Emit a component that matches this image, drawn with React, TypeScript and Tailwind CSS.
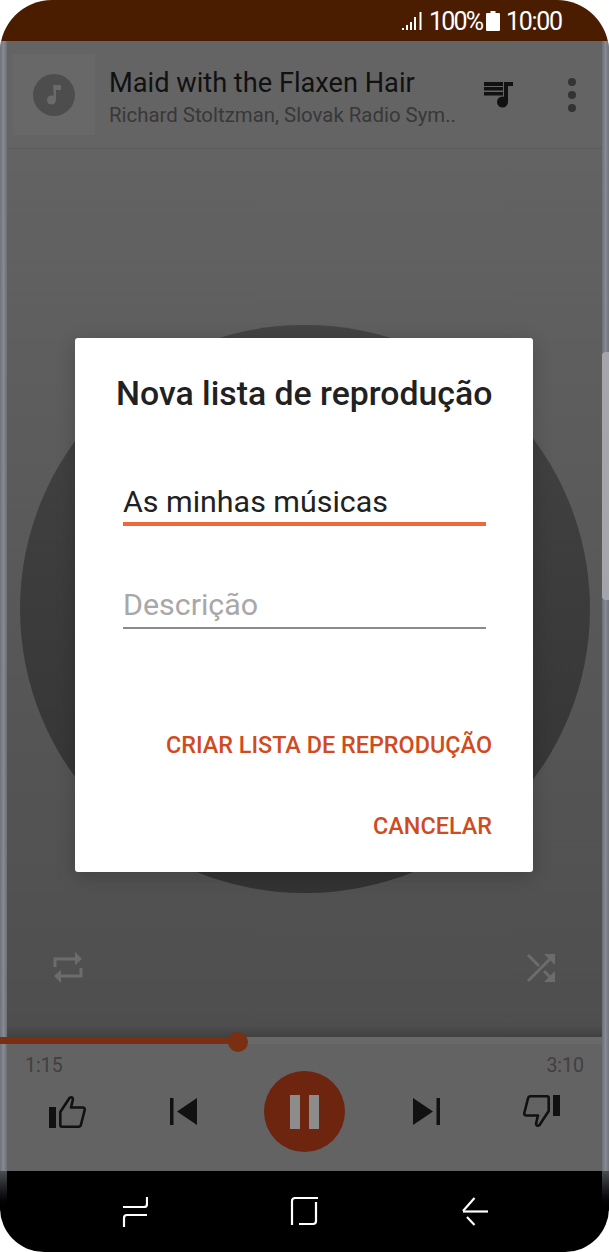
const roboto = { fontFamily: 'Roboto, "Liberation Sans", sans-serif' }

function Signal() {
  return (
    <svg width="20" height="19" viewBox="0 0 20 19" fill="#fff">
      <rect x="0" y="16" width="2" height="2" />
      <rect x="4" y="13" width="2" height="5" />
      <rect x="8" y="10" width="2" height="8" />
      <rect x="12" y="5" width="2" height="13" />
      <rect x="17.5" y="0" width="2" height="18" />
    </svg>
  )
}

function Battery() {
  return (
    <svg width="14" height="20" viewBox="0 0 14 20" fill="#fff">
      <path d="M4.500 0h5v2H13a1 1 0 0 1 1 1v16a1 1 0 0 1-1 1H1a1 1 0 0 1-1-1V3a1 1 0 0 1 1-1h3.500z" />
    </svg>
  )
}

function NoteGlyph() {
  return (
    <svg width="14" height="20" viewBox="0 0 14 20" fill="#6a6a6a">
      <circle cx="4.500" cy="15" r="4.500" />
      <rect x="6.500" y="0" width="2.500" height="15" />
      <path d="M6.500 0H14v5H6.500z" />
    </svg>
  )
}

function QueueIcon() {
  return (
    <svg width="29" height="26" viewBox="0 0 29 26" fill="#111">
      <rect x="0" y="0" width="19" height="4" />
      <rect x="0" y="5" width="19" height="3.500" />
      <rect x="0" y="10" width="19" height="3.500" />
      <rect x="20" y="0" width="4" height="20" />
      <rect x="20" y="0" width="9" height="4" />
      <circle cx="18.500" cy="20" r="5.500" />
    </svg>
  )
}

function RepeatIcon() {
  return (
    <svg width="30" height="33" viewBox="0 0 30 33" fill="none" stroke="#6c6c6c" strokeWidth="3">
      <path d="M2 16V8h20" />
      <path d="M22 1l7 7-7 6z" fill="#6c6c6c" stroke="none" />
      <path d="M28 17v8H8" />
      <path d="M8 19l-7 6 7 7z" fill="#6c6c6c" stroke="none" />
    </svg>
  )
}

function ShuffleIcon() {
  return (
    <svg width="28" height="28" viewBox="0 0 28 28" fill="none" stroke="#6c6c6c" strokeWidth="3">
      <path d="M1 1l11 11" />
      <path d="M1 27L23 5" />
      <path d="M17 17l7 7" />
      <path d="M17 0h11v11z" fill="#6c6c6c" stroke="none" />
      <path d="M28 17v11H17z" fill="#6c6c6c" stroke="none" />
    </svg>
  )
}

function ThumbUp() {
  return (
    <svg width="37" height="33" viewBox="0 0 37 33" fill="none">
      <rect x="0" y="12" width="7" height="21" fill="#111" />
      <path
        d="M11.300 30V17L20.500 3c1.700-1.500 3.800-.5 3.300 2L22 12.500h11.500c1.700 0 2.500 1 2.200 2.500l-3.700 14.500c-.4 1.500-1.200 2.200-2.500 2.200H13c-1 0-1.700-.7-1.700-1.700z"
        stroke="#111"
        strokeWidth="2.600"
        strokeLinejoin="round"
      />
    </svg>
  )
}

function PrevIcon() {
  return (
    <svg width="27" height="27" viewBox="0 0 27 27" fill="#111">
      <rect x="0" y="0" width="3.500" height="27" />
      <path d="M27 0v27L7 13.500z" />
    </svg>
  )
}

function NextIcon() {
  return (
    <svg width="27" height="27" viewBox="0 0 27 27" fill="#111">
      <path d="M0 0v27l20-13.500z" />
      <rect x="23.500" y="0" width="3.500" height="27" />
    </svg>
  )
}

function RecentsIcon() {
  return (
    <svg width="26" height="30" viewBox="0 0 26 30" fill="none" stroke="#fff" strokeWidth="2.200">
      <path d="M25 0v7a3 3 0 0 1-3 3H1" />
      <path d="M25 18H5a3 3 0 0 0-3 3v9" />
    </svg>
  )
}

function HomeIcon() {
  return (
    <svg width="28" height="29" viewBox="0 0 28 29" fill="none" stroke="#fff" strokeWidth="2.200">
      <path d="M2 28V4a3 3 0 0 1 3-3h23" />
      <path d="M26 5v19a3 3 0 0 1-3 3H9" />
    </svg>
  )
}

function BackIcon() {
  return (
    <svg width="27" height="29" viewBox="0 0 27 29" fill="none" stroke="#fff" strokeWidth="2.200">
      <path d="M27 14.500H2" />
      <path d="M13.500 1L2 14" />
      <path d="M13.500 28L6 20" />
    </svg>
  )
}

function DialogAction({ label }: { label: string }) {
  return (
    <button className="text-[23.400px] leading-[25px] font-medium text-[#d04b1e]">{label}</button>
  )
}

export default function App() {
  return (
    <div className="w-[609px] h-[1252px] bg-white overflow-hidden" style={roboto}>
      <div className="relative w-full h-full rounded-t-[52px] rounded-b-[44px] overflow-hidden flex flex-col">
        {/* status bar */}
        <div className="h-[41px] bg-[#4a1c00] flex items-center pl-[402px] pt-[1px] text-white text-[25px] shrink-0">
          <Signal />
          <span className="ml-[7px] w-[54px] tracking-[-1.800px] whitespace-nowrap pt-[1px]">100%</span>
          <span className="ml-[3px]">
            <Battery />
          </span>
          <span className="ml-[6px] tracking-[-1.300px] whitespace-nowrap pt-[1px]">10:00</span>
        </div>

        {/* now playing header */}
        <div className="h-[108px] bg-[#646464] border-b border-[#5a5a5a] flex items-center pl-[13px] pr-[33px] shrink-0">
          <div className="w-[82px] h-[81px] bg-[#686868] flex items-center justify-center">
            <div className="w-[42px] h-[42px] rounded-full bg-[#4d4d4d] flex items-center justify-center">
              <NoteGlyph />
            </div>
          </div>
          <div className="ml-[14px] flex-1 min-w-0 pt-[6px]">
            <div className="text-[27.200px] leading-[32px] text-[#111]">Maid with the Flaxen Hair</div>
            <div className="text-[20.400px] leading-[28px] text-[#383838] mt-[2px] whitespace-nowrap">Richard Stoltzman, Slovak Radio Sym..</div>
          </div>
          <div className="flex items-center gap-[55px]">
            <QueueIcon />
            <div className="flex flex-col gap-[5px]">
              <div className="w-[8px] h-[8px] rounded-full bg-[#333]" />
              <div className="w-[8px] h-[8px] rounded-full bg-[#333]" />
              <div className="w-[8px] h-[8px] rounded-full bg-[#333]" />
            </div>
          </div>
        </div>

        {/* album art area */}
        <div className="relative flex-1 bg-gradient-to-b from-[#636363] to-[#4e4e4e] flex flex-col justify-end">
          <div className="absolute left-[20px] top-[176px] w-[570px] h-[568px] rounded-full bg-gradient-to-b from-[#444444] to-[#333333]" />
          <div className="relative flex items-center justify-between pl-[53px] pr-[54px] pb-[53px]">
            <RepeatIcon />
            <ShuffleIcon />
          </div>
          <div className="absolute left-0 right-0 bottom-0 h-[12px] bg-gradient-to-b from-transparent to-[#414141]" />
        </div>

        {/* player controls */}
        <div className="relative h-[134px] bg-[#636363] shrink-0 px-[25px]">
          <div className="absolute left-0 right-0 top-0 h-[7px] bg-[#696969]" />
          <div className="absolute z-10 left-0 top-0 h-[7px] w-[238px] bg-[#7a2e12]" />
          <div className="absolute z-10 left-[228px] top-[-5px] w-[20px] h-[20px] rounded-full bg-[#7a2e12]" />
          <div className="flex justify-between text-[19.500px] leading-[24px] text-[#404040] pt-[17px]">
            <span>1:15</span>
            <span>3:10</span>
          </div>
          <div className="flex items-center pl-[24px] mt-[-7px]">
            <ThumbUp />
            <div className="ml-[84px]">
              <PrevIcon />
            </div>
            <div className="ml-[67px] w-[81px] h-[81px] rounded-full bg-[#6d2510] flex items-center justify-center gap-[9px]">
              <div className="w-[10px] h-[34px] bg-[#8c8c8c]" />
              <div className="w-[10px] h-[34px] bg-[#8c8c8c]" />
            </div>
            <div className="ml-[68px]">
              <NextIcon />
            </div>
            <div className="ml-[83px] rotate-180">
              <ThumbUp />
            </div>
          </div>
        </div>

        {/* nav bar */}
        <div className="h-[81px] bg-black flex items-start pl-[122px] pt-[26px] shrink-0">
          <RecentsIcon />
          <div className="ml-[142px]">
            <HomeIcon />
          </div>
          <div className="ml-[143px]">
            <BackIcon />
          </div>
        </div>

        {/* curved screen edges */}
        <div className="absolute left-0 top-[41px] h-[1130px] w-[7px] bg-gradient-to-r from-[#6f727a] via-[#888a92] to-[#6c6f77]" />
        <div className="absolute right-0 top-[41px] h-[1130px] w-[7px] bg-gradient-to-r from-[#6c6f77] via-[#888a92] to-[#6f727a]" />
        <div className="absolute left-0 top-[1171px] h-[40px] w-[7px] bg-gradient-to-b from-[#4c4e54] to-black" />
        <div className="absolute right-0 top-[1171px] h-[40px] w-[7px] bg-gradient-to-b from-[#4c4e54] to-black" />
        <div className="absolute right-0 top-[352px] w-[7px] h-[248px] rounded-l-[4px] bg-[#a3a5ab]" />

        {/* dialog */}
        <div className="absolute left-[75px] top-[338px] w-[458px] h-[534px] bg-white rounded-[3px] shadow-[0_4px_20px_rgba(0,0,0,0.2)] pt-[37px] px-[41px]">
          <h2 className="text-[33.800px] leading-[37px] font-medium text-[#212121] whitespace-nowrap">Nova lista de reprodução</h2>
          <div className="mt-[71px] mx-[7px] border-b-[4px] border-[#f0673a] pb-[1px] text-[30.400px] leading-[38px] text-[#212121] w-[363px]">As minhas músicas</div>
          <div className="mt-[60px] mx-[7px] border-b-2 border-[#8a8a8a] pb-[3px] text-[30.400px] leading-[38px] text-[#a8a8a8] w-[363px]">Descrição</div>
          <div className="flex flex-col items-end mt-[104px] gap-[56px]">
            <DialogAction label="CRIAR LISTA DE REPRODUÇÃO" />
            <DialogAction label="CANCELAR" />
          </div>
        </div>
      </div>
    </div>
  )
}
